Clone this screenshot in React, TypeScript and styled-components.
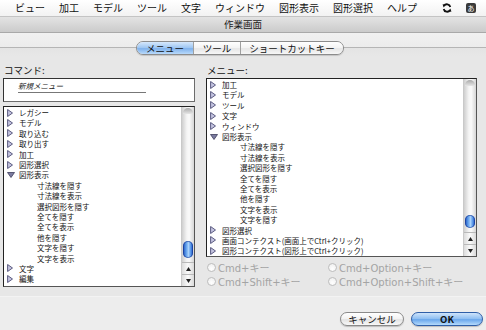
import React from 'react';
import styled, { createGlobalStyle } from 'styled-components';

const GlobalStyle = createGlobalStyle`
  html, body { margin: 0; padding: 0; }
  body {
    width: 486px; height: 330px; overflow: hidden;
    font-family: "Noto Sans CJK JP", "Liberation Sans", sans-serif;
    background: #e7e7e7;
  }
`;

const JP = `"Noto Sans CJK JP", "Liberation Sans", sans-serif`;
const LATIN = `"DejaVu Sans", "Noto Sans CJK JP", sans-serif`;

const Window = styled.div`
  width: 486px; height: 330px;
  display: flex; flex-direction: column;
  background: #e7e7e7;
`;

const MenuBar = styled.div`
  height: 17px; box-sizing: border-box;
  display: flex; align-items: center;
  padding-left: 15px; gap: 14px;
  background: linear-gradient(#ffffff, #f2f2f2);
  border-bottom: 1px solid #c4c4c4;
  font-family: ${JP}; font-size: 10px; color: #111;
`;

const MenuItem = styled.span`
  line-height: 16px; white-space: nowrap;
`;

const MenuIcons = styled.div`
  margin-left: auto; margin-right: 10px;
  display: flex; align-items: center; gap: 14px;
`;

const ImeBadge = styled.span`
  width: 10px; height: 10px; border-radius: 2px;
  background: #3a3a3a; color: #fff;
  font-size: 7px; line-height: 10px; text-align: center;
`;

const TitleBar = styled.div`
  height: 16px; box-sizing: border-box;
  display: flex; align-items: center; justify-content: center;
  background: linear-gradient(#e3e3e3, #cbcbcb);
  border-bottom: 1px solid #a9a9a9;
  font-family: ${JP}; font-size: 9.5px; color: #1a1a1a;
`;

const TabRow = styled.div`
  height: 24px; box-sizing: border-box;
  padding-top: 8px;
  display: flex; justify-content: center; align-items: flex-start;
  background: linear-gradient(#f1f1f1 0px, #ececec 14px, #b5b5b5 14px, #b5b5b5 15px, #e4e4e4 15px, #e7e7e7 24px);
`;

const Segmented = styled.div`
  display: flex; height: 14px; box-sizing: border-box;
  margin-left: -6px;
  border: 1px solid #8c8c8c; border-radius: 7px; overflow: hidden;
  box-shadow: 0 1px 1px rgba(0,0,0,0.15);
`;

const Segment = styled.div<{ $w: number; $active?: boolean }>`
  width: ${p => p.$w}px; box-sizing: border-box;
  display: flex; align-items: center; justify-content: center;
  font-family: ${JP}; font-size: 9.5px; color: #111; line-height: 12px;
  border-left: 1px solid #a0a0a0;
  &:first-child { border-left: none; }
  background: ${p => p.$active
    ? 'linear-gradient(#d6e8fc, #9cc5f2 50%, #7fb1ec 55%, #b9dafb)'
    : 'linear-gradient(#ffffff, #f3f3f3 50%, #e6e6e6 55%, #f7f7f7)'};
`;

const Body = styled.div`
  flex: 1; display: flex; gap: 11px;
  padding: 7px 9px 8px 3px;
`;

const Column = styled.div<{ $w: number }>`
  width: ${p => p.$w}px;
  display: flex; flex-direction: column;
`;

const Label = styled.div`
  height: 15px; line-height: 14px;
  font-family: ${JP}; font-size: 9.5px; color: #111;
  padding-left: 1px;
`;

const CommandBox = styled.div`
  height: 24px; box-sizing: border-box;
  background: #fff;
  border: 1px solid #6c6c6c; border-top-color: #333; border-left-color: #333;
  padding: 2px 0 0 14px;
  display: flex; flex-direction: column;
`;

const CommandText = styled.div`
  width: 128px; height: 12px; box-sizing: border-box;
  border-bottom: 1px solid #777;
  font-family: ${JP}; font-size: 7.5px; font-style: italic; color: #222;
  line-height: 10px;
`;

const ListBox = styled.div<{ $h: number; $mt: number }>`
  height: ${p => p.$h}px; margin-top: ${p => p.$mt}px; box-sizing: border-box;
  background: #fff;
  border: 1px solid #555; border-top-color: #222; border-left-color: #222;
  display: flex; overflow: hidden;
`;

const Rows = styled.div`
  flex: 1; display: flex; flex-direction: column;
  padding-left: 3px;
`;

const Row = styled.div<{ $child?: boolean }>`
  height: 10.4px; flex: none;
  display: flex; align-items: center;
  font-family: ${JP}; font-size: 7.5px; color: #111; white-space: nowrap;
  padding-left: ${p => (p.$child ? 30 : 0)}px;
`;

const Disclosure = styled.span`
  width: 12px; flex: none; display: flex; align-items: center;
`;

const Scrollbar = styled.div`
  width: 12px; flex: none;
  display: flex; flex-direction: column;
  border-left: 1px solid #c9c9c9;
  background: linear-gradient(to right, #cfcfcf, #f4f4f4 40%, #fafafa 60%, #d6d6d6);
`;

const TrackCap = styled.div`
  height: 6px; flex: none;
  border-radius: 6px 6px 0 0;
  background: linear-gradient(#a9a9a9, #e6e6e6);
  margin: 1px 1px 0;
`;

const Spacer = styled.div<{ $h?: number }>`
  flex: ${p => (p.$h ? 'none' : '1')};
  height: ${p => (p.$h ? `${p.$h}px` : 'auto')};
`;

const Thumb = styled.div<{ $h: number }>`
  height: ${p => p.$h}px; flex: none; margin: 0 1px;
  border-radius: 6px;
  background: linear-gradient(to right, #1d4fb8, #5b9bea 30%, #a8d2fb 55%, #4f8ee6 80%, #1b4eb6);
  box-shadow: inset 0 0 0 1px rgba(20,50,140,0.6);
`;

const ArrowBtn = styled.div`
  height: 11px; flex: none;
  display: flex; align-items: center; justify-content: center;
  border-top: 1px solid #b9b9b9;
  background: linear-gradient(to right, #dcdcdc, #fbfbfb 50%, #dadada);
`;

const RadioGrid = styled.div`
  margin-top: 3px; padding-left: 1px;
  display: grid; grid-template-columns: 121px 1fr; grid-auto-rows: 14px;
`;

const RadioItem = styled.div`
  display: flex; align-items: center; gap: 2px;
  font-family: ${LATIN}; font-size: 10px; color: #a4a4a4; white-space: nowrap;
`;

const RadioCircle = styled.span`
  width: 9px; height: 9px; box-sizing: border-box; border-radius: 50%;
  border: 1px solid #bdbdbd;
  background: radial-gradient(circle at 50% 70%, #ffffff, #ececec);
`;

const Footer = styled.div`
  height: 34px; box-sizing: border-box;
  padding: 15px 3px 0 0;
  display: flex; justify-content: flex-end; align-items: flex-start; gap: 7px;
  background: #ededed;
  border-top: 1px solid #f3f3f3;
`;

const Button = styled.div<{ $w: number; $primary?: boolean }>`
  width: ${p => p.$w}px; height: 14px; box-sizing: border-box;
  border-radius: 7px;
  display: flex; align-items: center; justify-content: center;
  font-family: ${JP}; font-size: 9.5px; color: #111;
  border: 1px solid ${p => (p.$primary ? '#2f5fa8' : '#8a8a8a')};
  background: ${p => p.$primary
    ? 'linear-gradient(#cfe4fb, #8cbdf2 50%, #6aa7ec 55%, #b4dafc)'
    : 'linear-gradient(#ffffff, #f2f2f2 50%, #e3e3e3 55%, #f8f8f8)'};
  font-weight: ${p => (p.$primary ? 700 : 400)};
  box-shadow: 0 1px 1px rgba(0,0,0,0.2);
`;

type Item = { t: string; k: 'closed' | 'open' | 'child' };

const hideShow = ['寸法線を隠す', '寸法線を表示', '選択図形を隠す', '全てを隠す', '全てを表示', '他を隠す'];

const leftItems: Item[] = [
  ...['レガシー', 'モデル', '取り込む', '取り出す', '加工', '図形選択'].map(t => ({ t, k: 'closed' as const })),
  { t: '図形表示', k: 'open' },
  ...[...hideShow, '文字を隠す', '文字を表示'].map(t => ({ t, k: 'child' as const })),
  { t: '文字', k: 'closed' },
  { t: '編集', k: 'closed' },
];

const rightItems: Item[] = [
  ...['加工', 'モデル', 'ツール', '文字', 'ウィンドウ'].map(t => ({ t, k: 'closed' as const })),
  { t: '図形表示', k: 'open' },
  ...[...hideShow, '文字を表示', '文字を隠す'].map(t => ({ t, k: 'child' as const })),
  { t: '図形選択', k: 'closed' },
  { t: '画面コンテクスト(画面上でCtrl+クリック)', k: 'closed' },
  { t: '図形コンテクスト(図形上でCtrl+クリック)', k: 'closed' },
];

const Tri = ({ open }: { open?: boolean }) =>
  open ? (
    <svg width="8" height="6" viewBox="0 0 8 6">
      <polygon points="0.5,0.5 7.5,0.5 4,5.5" fill="#7c7ca0" stroke="#3c3c5c" strokeWidth="0.8" />
    </svg>
  ) : (
    <svg width="6" height="8" viewBox="0 0 6 8">
      <polygon points="0.6,0.5 5.5,4 0.6,7.5" fill="#c4c4e0" stroke="#4c4c74" strokeWidth="0.9" />
    </svg>
  );

const ArrowGlyph = ({ up }: { up?: boolean }) => (
  <svg width="5" height="4" viewBox="0 0 5 4">
    <polygon points={up ? '2.5,0 5,4 0,4' : '0,0 5,0 2.5,4'} fill="#222" />
  </svg>
);

const SyncIcon = () => (
  <svg width="10" height="10" viewBox="0 0 10 10">
    <path d="M8.3 4A3.4 3.4 0 0 0 2 3" fill="none" stroke="#111" strokeWidth="1.8" />
    <polygon points="0.6,1.2 3.6,1.6 1.6,4.4" fill="#111" />
    <path d="M1.7 6A3.4 3.4 0 0 0 8 7" fill="none" stroke="#111" strokeWidth="1.8" />
    <polygon points="9.4,8.8 6.4,8.4 8.4,5.6" fill="#111" />
  </svg>
);

const List = ({ items, h, mt, thumb }: { items: Item[]; h: number; mt: number; thumb: number }) => (
  <ListBox $h={h} $mt={mt}>
    <Rows>
      {items.map((it, i) => (
        <Row key={i} $child={it.k === 'child'}>
          {it.k !== 'child' && (
            <Disclosure>
              <Tri open={it.k === 'open'} />
            </Disclosure>
          )}
          {it.t}
        </Row>
      ))}
    </Rows>
    <Scrollbar>
      <TrackCap />
      <Spacer />
      <Thumb $h={thumb} />
      <Spacer $h={4} />
      <ArrowBtn><ArrowGlyph up /></ArrowBtn>
      <ArrowBtn><ArrowGlyph /></ArrowBtn>
    </Scrollbar>
  </ListBox>
);

export default function App() {
  const menus = ['ビュー', '加工', 'モデル', 'ツール', '文字', 'ウィンドウ', '図形表示', '図形選択', 'ヘルプ'];
  return (
    <>
      <GlobalStyle />
      <Window>
        <MenuBar>
          {menus.map(m => <MenuItem key={m}>{m}</MenuItem>)}
          <MenuIcons>
            <SyncIcon />
            <ImeBadge>あ</ImeBadge>
          </MenuIcons>
        </MenuBar>
        <TitleBar>作業画面</TitleBar>
        <TabRow>
          <Segmented>
            <Segment $w={56} $active>メニュー</Segment>
            <Segment $w={47}>ツール</Segment>
            <Segment $w={103}>ショートカットキー</Segment>
          </Segmented>
        </TabRow>
        <Body>
          <Column $w={192}>
            <Label>コマンド:</Label>
            <CommandBox>
              <CommandText>新規メニュー</CommandText>
            </CommandBox>
            <List items={leftItems} h={181} mt={4} thumb={17} />
          </Column>
          <Column $w={271}>
            <Label>メニュー:</Label>
            <List items={rightItems} h={179} mt={0} thumb={13} />
            <RadioGrid>
              <RadioItem><RadioCircle />Cmd+キー</RadioItem>
              <RadioItem><RadioCircle />Cmd+Option+キー</RadioItem>
              <RadioItem><RadioCircle />Cmd+Shift+キー</RadioItem>
              <RadioItem><RadioCircle />Cmd+Option+Shift+キー</RadioItem>
            </RadioGrid>
          </Column>
        </Body>
        <Footer>
          <Button $w={64}>キャンセル</Button>
          <Button $w={72} $primary>OK</Button>
        </Footer>
      </Window>
    </>
  );
}
